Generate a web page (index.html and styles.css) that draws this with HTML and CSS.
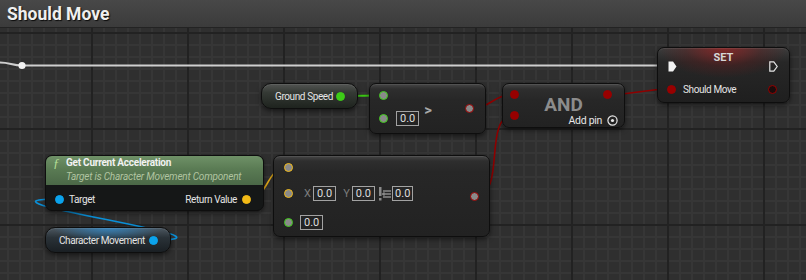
FILE: index.html
```html
<!DOCTYPE html>
<html lang="en">
<head>
    <meta charset="UTF-8">
    <meta name="viewport" content="width=device-width, initial-scale=1.0">
    <title>Should Move</title>
    <link rel="stylesheet" href="styles.css">
</head>
<body>
    <!-- Graph title -->
    <div class="title-bar">Should Move</div>

    <div class="graph">
        <!-- Wires sit under the nodes -->
        <svg class="wires" width="806" height="252" viewBox="0 0 806 252">
            <path class="wire-exec" d="M0,34.5 C10,34.5 12,37.5 22,37.5 L668,37.5"/>
            <circle cx="22" cy="37.5" r="3.6" fill="#f2f2f2"/>
            <path class="wire-float" d="M340,68 C362,68 361,67.5 383.5,67.5"/>
            <path class="wire-bool" d="M469.5,80.5 C492,80.5 492,66.5 514.5,66.5"/>
            <path class="wire-bool" d="M474.5,168 C508,168 481,87 514.5,87"/>
            <path class="wire-bool" d="M607,66.5 C640,66.5 640,61 671.5,61"/>
            <path class="wire-vec" d="M246.5,171 C270,171 265,139 288.5,139"/>
            <path class="wire-obj" d="M153,212 C263,212 -51,171 59.5,171"/>
        </svg>

        <!-- SET Should Move -->
        <div class="node node-set">
            <div class="set-title">SET</div>
            <div class="exec-row">
                <svg width="9" height="11" viewBox="0 0 9 11"><path d="M0.5 0.5 H5 L8.5 5.5 L5 10.5 H0.5 Z" fill="#f2f2f2"/></svg>
                <svg width="9" height="11" viewBox="0 0 9 11"><path d="M0.8 0.8 H4.8 L8.2 5.5 L4.8 10.2 H0.8 Z" fill="none" stroke="#e4e4e4" stroke-width="1.2"/></svg>
            </div>
            <div class="pin-row set-row">
                <span class="pin pin-bool fill"></span>
                <span class="label">Should Move</span>
                <span class="pin pin-bool dark push"></span>
            </div>
        </div>

        <!-- Ground Speed getter -->
        <div class="node node-pure node-ground">
            <span class="label">Ground Speed</span>
            <span class="pin pin-float fill"></span>
        </div>

        <!-- float > float -->
        <div class="node node-compare">
            <div class="input-col">
                <div class="pin-row compare-row"><span class="pin pin-float"></span></div>
                <div class="pin-row compare-row second">
                    <span class="pin pin-float"></span>
                    <span class="value-box">0.0</span>
                </div>
            </div>
            <span class="op">&gt;</span>
            <span class="pin pin-bool push"></span>
        </div>

        <!-- AND -->
        <div class="node node-and">
            <div class="pin-row and-top">
                <span class="pin pin-bool fill"></span>
                <span class="pin pin-bool fill push"></span>
            </div>
            <div class="and-title">AND</div>
            <div class="pin-row and-bottom">
                <span class="pin pin-bool fill"></span>
                <span class="add-pin push">Add pin
                    <svg width="11" height="11" viewBox="0 0 11 11"><circle cx="5.5" cy="5.5" r="4.6" fill="none" stroke="#e8e8e8" stroke-width="1.2"/><circle cx="5.5" cy="5.5" r="1.6" fill="#e8e8e8"/></svg>
                </span>
            </div>
        </div>

        <!-- Get Current Acceleration -->
        <div class="node node-func">
            <div class="func-header">
                <div class="func-title"><span class="func-icon">ƒ</span>Get Current Acceleration</div>
                <div class="func-sub">Target is Character Movement Component</div>
            </div>
            <div class="pin-row func-row">
                <span class="pin pin-obj fill"></span>
                <span class="label">Target</span>
                <span class="label push">Return Value</span>
                <span class="pin pin-vec fill"></span>
            </div>
        </div>

        <!-- Character Movement getter -->
        <div class="node node-pure node-movement">
            <span class="label">Character Movement</span>
            <span class="pin pin-obj fill"></span>
        </div>

        <!-- vector compare -->
        <div class="node node-vector">
            <div class="input-col vec-col">
                <div class="pin-row vec-row"><span class="pin pin-vec"></span></div>
                <div class="pin-row vec-row second">
                    <span class="pin pin-vec"></span>
                    <span class="axis axis-x">X</span><span class="value-box">0.0</span>
                    <span class="axis">Y</span><span class="value-box">0.0</span>
                    <svg class="vec-icon" width="12" height="15" viewBox="0 0 12 15">
                        <rect x="0" y="1" width="2.5" height="9" fill="#8a8a8a"/>
                        <rect x="0" y="12" width="2.5" height="2.5" fill="#8a8a8a"/>
                        <path d="M4 5 H12 M3.5 8 H12 M4 11 H12 M5.5 6.5 L3.5 8 L5.5 9.5" stroke="#8a8a8a" stroke-width="1.3" fill="none"/>
                    </svg>
                    <span class="value-box narrow">0.0</span>
                </div>
                <div class="pin-row vec-row third">
                    <span class="pin pin-float"></span>
                    <span class="value-box">0.0</span>
                </div>
            </div>
            <span class="pin pin-bool push"></span>
        </div>
    </div>
</body>
</html>
```

FILE: styles.css
```css
/* Blueprint graph */
:root {
    --float: #3dcc17;
    --bool: #980000;
    --vec: #f2ba16;
    --obj: #0ba3ec;
    --pin-grey: #8a8a8a;
}

body {
    margin: 0;
    background: #2f2f2f;
    font-family: Roboto, "Noto Sans", sans-serif;
    color: #e4e4e4;
    overflow: hidden;
}

.title-bar {
    height: 27px;
    border-bottom: 1px solid #232323;
    background: linear-gradient(to bottom, #484848, #3b3b3b);
    padding-left: 7px;
    font-size: 17.5px;
    font-weight: bold;
    line-height: 28px;
    color: #efefef;
    text-shadow: 1px 1px 1px #0c0c0c;
}

.graph {
    position: relative;
    height: 252px;
    background-color: #2f2f2f;
    background-image:
        linear-gradient(to right, #222 2px, transparent 2px),
        linear-gradient(to bottom, #222 2px, transparent 2px),
        linear-gradient(to right, #363636 2px, transparent 2px),
        linear-gradient(to bottom, #363636 2px, transparent 2px);
    background-size: 96px 96px, 96px 96px, 12px 12px, 12px 12px;
    background-position: 91px 0, 0 4px, 7px 0, 0 4px;
}

/* Wires */
.wires {
    position: absolute;
    left: 0;
    top: 0;
}

.wires path {
    fill: none;
    stroke-width: 1.6;
}

.wires .wire-exec { stroke: #cfcfcf; stroke-width: 2; }
.wires .wire-float { stroke: #3cc814; stroke-width: 2; }
.wire-bool { stroke: #8e0000; }
.wire-vec { stroke: #e0a816; }
.wire-obj { stroke: #0a90d8; }

/* Nodes */
.node {
    position: absolute;
    box-sizing: border-box;
    border: 1px solid #0e0e0e;
    border-radius: 7px;
    background: linear-gradient(to bottom, #464646 0, #2e2e2e 5px, #272727 16px, #222 100%);
    box-shadow: 0 2px 5px rgba(0, 0, 0, 0.55), inset 0 1px 0 rgba(255, 255, 255, 0.08);
}

.pin-row {
    display: flex;
    align-items: center;
}

.push {
    margin-left: auto;
}

.label {
    font-size: 10px;
    letter-spacing: -0.4px;
    color: #e4e4e4;
    white-space: nowrap;
}

/* Pins */
.pin {
    flex: none;
    box-sizing: border-box;
    width: 9px;
    height: 9px;
    border-radius: 50%;
    border: 1.5px solid;
    background: var(--pin-grey);
}

.pin-float { border-color: var(--float); }
.pin-float.fill { background: var(--float); }
.pin-bool { border-color: var(--bool); }
.pin-bool.fill { background: var(--bool); }
.pin-bool.dark { background: #1c0c0c; }
.pin-vec { border-color: var(--vec); }
.pin-vec.fill { background: var(--vec); }
.pin-obj { border-color: var(--obj); }
.pin-obj.fill { background: var(--obj); }

.value-box {
    box-sizing: border-box;
    height: 15px;
    padding: 0 3px;
    border: 1px solid #a2a2a2;
    font-size: 11px;
    line-height: 13px;
    color: #dedede;
}

/* SET */
.node-set {
    left: 657px;
    top: 19px;
    width: 133px;
    height: 56px;
    background:
        radial-gradient(ellipse 64px 30px at 50% 0, rgba(150, 36, 36, 0.8), rgba(110, 26, 26, 0.3) 60%, transparent 100%),
        linear-gradient(to bottom, #3c3c3c 0, #272727 14px, #1f1f1f 100%);
}

.set-title {
    padding-top: 4px;
    height: 12px;
    line-height: 12px;
    text-align: center;
    font-size: 11px;
    font-weight: bold;
    color: #d6d6d6;
}

.exec-row {
    display: flex;
    justify-content: space-between;
    align-items: center;
    height: 12px;
    margin-top: -4px;
    padding: 0 11px 0 10px;
}

.set-row {
    height: 14px;
    margin-top: 10px;
    padding: 0 12px 0 9px;
    gap: 7px;
}

/* Pure getters */
.node-pure {
    display: flex;
    align-items: center;
    justify-content: space-between;
    border-radius: 10px;
}

.node-ground {
    left: 261px;
    top: 55px;
    width: 97px;
    height: 26px;
    padding: 0 12.5px 0 13px;
    background: linear-gradient(to bottom, #525452 0, #353a35 35%, #1e231e 100%);
}

.node-movement {
    left: 45px;
    top: 199px;
    width: 126px;
    height: 26px;
    padding: 0 12.5px 0 13px;
    background:
        radial-gradient(ellipse 55px 13px at 50% 0, rgba(50, 140, 205, 0.8), transparent 100%),
        linear-gradient(to bottom, #4c5760 0, #2a3238 40%, #1a1f23 100%);
}

/* Compare */
.node-compare {
    left: 369px;
    top: 55px;
    width: 117px;
    height: 51px;
    display: flex;
    align-items: center;
    padding: 0 11px 0 9px;
}

.input-col {
    align-self: flex-start;
    display: flex;
    flex-direction: column;
}

.compare-row {
    height: 11px;
    margin-top: 6px;
}

.compare-row.second {
    height: 15px;
    margin-top: 10px;
}

.compare-row .value-box {
    margin-left: 8px;
}

.op {
    margin: 2px 0 0 5px;
    font-size: 15px;
    font-weight: bold;
    color: #a8a8a8;
}

/* AND */
.node-and {
    left: 502px;
    top: 55px;
    width: 123px;
    height: 45px;
    display: flex;
    flex-direction: column;
}

.and-top {
    padding: 6px 12.5px 0 7px;
}

.and-title {
    margin-top: -4.5px;
    height: 19px;
    line-height: 19px;
    text-align: center;
    font-size: 19px;
    font-weight: bold;
    color: #8c8c8c;
}

.and-bottom {
    align-items: flex-start;
    margin-top: -3px;
    padding: 0 6px 0 7px;
}

.add-pin {
    display: flex;
    align-items: center;
    gap: 5px;
    margin-top: 3.5px;
    height: 12px;
    font-size: 10.5px;
    letter-spacing: -0.3px;
    color: #e6e6e6;
}

/* Function call */
.node-func {
    left: 45px;
    top: 127px;
    width: 219px;
    height: 56px;
    background: #151717;
}

.func-header {
    height: 29px;
    padding: 1px 0 0 7px;
    box-sizing: border-box;
    border-radius: 6px 6px 0 0;
    background: linear-gradient(to bottom, #6f9167 0, #5a7b54 45%, #4b6847 100%);
}

.func-title {
    display: flex;
    height: 12px;
    line-height: 12px;
    font-size: 10px;
    font-weight: bold;
    letter-spacing: -0.25px;
    color: #f2f2f2;
}

.func-icon {
    width: 13px;
    font-family: "Liberation Serif", serif;
    font-style: italic;
    font-weight: normal;
    font-size: 13px;
    color: #b4df96;
}

.func-sub {
    margin: 2px 0 0 13px;
    line-height: 12px;
    font-size: 10px;
    font-style: italic;
    letter-spacing: -0.2px;
    color: #b0c4a0;
}

.func-row {
    height: 14px;
    margin-top: 7px;
    padding: 0 12px 0 9px;
    gap: 5px;
}

/* Vector compare */
.node-vector {
    left: 273px;
    top: 127px;
    width: 217px;
    height: 82px;
    display: flex;
    align-items: center;
    padding: 0 10px;
}

.vec-col {
    padding-top: 3px;
}

.vec-row {
    height: 16px;
}

.vec-row.second {
    margin-top: 10px;
}

.vec-row.third {
    margin-top: 13px;
}

.vec-row.third .value-box {
    margin-left: 7px;
}

.axis {
    margin-right: 2px;
    font-size: 11px;
    color: #7c7c7c;
}

.axis-x {
    margin-left: 11px;
}

.value-box + .axis {
    margin-left: 7px;
}

.vec-icon {
    margin: 0 1px 0 4px;
}

.value-box.narrow {
    padding: 0 2px;
}
```
